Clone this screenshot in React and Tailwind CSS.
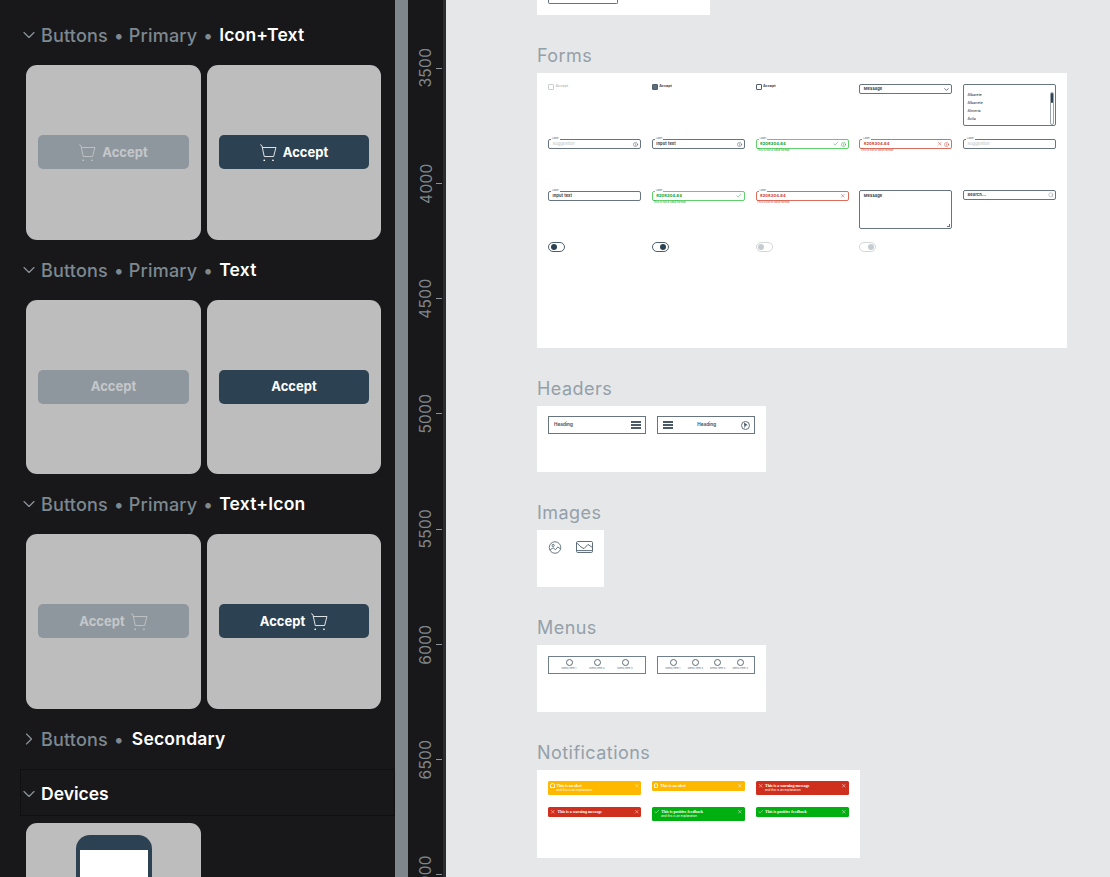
import { Check, X, ChevronDown, ChevronRight, Search, Info } from "lucide-react";

const FONT = "font-['Inter','Liberation_Sans',sans-serif]";

function Cart({ className }) {
  return (
    <svg viewBox="0 0 16 16" fill="none" stroke="currentColor" strokeWidth="0.8" className={className}>
      <path d="M0.2 0.6 L1.8 1.5 L4 11.8 H12.8 L15 3.3 H2.2" />
      <circle cx="4" cy="15.4" r="0.8" fill="currentColor" stroke="none" />
      <circle cx="12.2" cy="15.4" r="0.8" fill="currentColor" stroke="none" />
    </svg>
  );
}

function SectionHead({ parts, active, open = true }) {
  return (
    <div className="h-[60px] flex items-center pl-[19px] text-[18px] tracking-[0.2px]">
      {open ? (
        <ChevronDown size={20} strokeWidth={1.4} className="text-[#8b959c] mr-[2px] shrink-0" />
      ) : (
        <ChevronRight size={20} strokeWidth={1.4} className="text-[#8b959c] mr-[2px] shrink-0" />
      )}
      {parts.map((p) => (
        <span key={p} className="text-[#7d8890] font-medium mr-[5px]">
          {p} <span className="ml-[1px]">•</span>
        </span>
      ))}
      <span className={`text-white font-semibold text-[17.5px] ${open ? "ml-[1px]" : "ml-[3px]"}`}>{active}</span>
    </div>
  );
}

function Btn({ disabled, icon, width }) {
  const tone = disabled ? "bg-[#8f979e] text-[#c4c7ca]" : "bg-[#2c4252] text-white";
  return (
    <div className={`${width} h-[34px] rounded-[5px] pt-[1px] flex items-center justify-center gap-[6px] text-[13px] font-bold ${tone}`}>
      {icon === "left" && <Cart className="w-[17px] h-[17px]" />}
      <span>Accept</span>
      {icon === "right" && <Cart className="w-[17px] h-[17px]" />}
    </div>
  );
}

function ButtonRow({ icon, height = "h-[175px]" }) {
  return (
    <div className="grid grid-cols-[175px_174px] gap-x-[6px] pl-[26px]">
      <div className={`${height} rounded-[11px] bg-[#bdbdbd] flex items-center justify-center pb-[1px]`}>
        <Btn disabled icon={icon} width="w-[151px]" />
      </div>
      <div className={`${height} rounded-[11px] bg-[#bdbdbd] flex items-center justify-center pb-[1px]`}>
        <Btn icon={icon} width="w-[150px]" />
      </div>
    </div>
  );
}

function Sidebar() {
  return (
    <aside className="w-[395px] shrink-0 bg-[#18181a] pt-[5px] overflow-hidden">
      <SectionHead parts={["Buttons", "Primary"]} active="Icon+Text" />
      <ButtonRow icon="left" />
      <SectionHead parts={["Buttons", "Primary"]} active="Text" />
      <ButtonRow height="h-[174px]" />
      <SectionHead parts={["Buttons", "Primary"]} active="Text+Icon" />
      <ButtonRow icon="right" />
      <SectionHead parts={["Buttons"]} active="Secondary" open={false} />
      <div className="ml-[20px] h-[47px] border border-[#101012] flex items-center pt-[3px] text-[17.5px] font-semibold text-white">
        <ChevronDown size={20} strokeWidth={1.4} className="text-[#8b959c] -ml-[2px] mr-[2px]" />
        Devices
      </div>
      <div className="ml-[26px] mt-[7px] w-[175px] h-[175px] rounded-[11px] bg-[#bdbdbd] pt-[12px]">
        <div className="mx-auto w-[76px] h-[150px] rounded-t-[14px] bg-[#2c4252] pt-[15px] px-[4px]">
          <div className="h-full bg-white" />
        </div>
      </div>
    </aside>
  );
}

function Ruler() {
  const marks = [3500, 4000, 4500, 5000, 5500, 6000, 6500, 7000];
  return (
    <div className="w-[38px] shrink-0 bg-[#18181a] border-r-[3px] border-[#2b2e31] pt-[10.4px] overflow-hidden">
      {marks.map((m) => (
        <div key={m} className="h-[115.25px] flex items-center">
          <div className="w-[28px] flex justify-center pl-[8px]">
            <span className="-rotate-90 text-[15.5px] tracking-[0.3px] text-[#7f878d]">{m}</span>
          </div>
          <div className="w-[6px] h-px bg-[#8b9298]" />
        </div>
      ))}
    </div>
  );
}

function Heading({ children }) {
  return (
    <div className="h-[58px] pt-[31px] text-[18px] leading-[20px] tracking-[0.45px] text-[#94a0a8]">
      {children}
    </div>
  );
}

function CheckItem({ state }) {
  const box = state === "off" ? "border-[#c9ced2]" : "border-[#4d5f6c]";
  const text = state === "off" ? "text-[#c2c7cb]" : "text-[#3c4d5a]";
  return (
    <div className={`flex items-center gap-[1.5px] text-[3.6px] font-bold h-[6px] ${text}`}>
      <div className={`w-[6px] h-[6px] rounded-[1px] border ${box} ${state === "on" ? "bg-[#5d6c78]" : "bg-white"}`} />
      Accept
    </div>
  );
}

const TONES = {
  base: { border: "border-[#66757f]", text: "text-[#33434f]" },
  ok: { border: "border-[#5fd06b]", text: "text-[#0a9d1c]" },
  bad: { border: "border-[#dc6d5d]", text: "text-[#cc3a28]" },
};

function Field({ tone = "base", value, muted, icons, helper }) {
  const t = TONES[tone];
  return (
    <div className="relative mt-[1px] w-[93px]">
      <span className="absolute left-[3px] -top-[2px] px-[1px] bg-white text-[2.6px] leading-[3px] text-[#5b6b78]">Label</span>
      <div className={`h-[10px] rounded-[2px] border ${t.border} flex items-center justify-between pl-[3.5px] pr-[2px]`}>
        <span className={`text-[4px] tracking-[0.1px] font-bold ${muted ? "text-[#b4bcc2] font-normal" : t.text}`}>{value}</span>
        <span className={`flex items-center gap-[2px] ${t.text}`}>{icons}</span>
      </div>
      {helper && <div className={`text-[2.8px] leading-[3.5px] pl-[1.5px] ${t.text}`}>This is not a valid format</div>}
    </div>
  );
}

function Toggle({ on, disabled }) {
  const border = disabled ? "border-[#d3d7da]" : "border-[#4d5f6c]";
  const knob = disabled ? "bg-[#c5cbcf]" : "bg-[#2c4252]";
  return (
    <div className={`w-[17px] h-[10px] rounded-full border ${border} flex items-center px-[1.5px] ${on ? "justify-end" : ""}`}>
      <div className={`w-[6px] h-[6px] rounded-full ${knob}`} />
    </div>
  );
}

function FormsPanel() {
  const info = <Info size={5} strokeWidth={2} />;
  const check = <Check size={5.5} strokeWidth={2} />;
  const cross = <X size={5.5} strokeWidth={2} />;
  return (
    <div className="w-[530px] h-[275px] bg-white pt-[11px] pl-[11px] grid grid-cols-[repeat(5,93px)] grid-rows-[54px_52px_51px_1fr] gap-x-[10.75px] justify-start items-start">
      <CheckItem state="off" />
      <CheckItem state="on" />
      <CheckItem />
      <div className="h-[10px] rounded-[2px] border border-[#66757f] flex items-center justify-between pl-[3.5px] pr-[1px] text-[4px] tracking-[0.1px] font-bold text-[#33434f]">
        Message
        <ChevronDown size={7} strokeWidth={2.5} className="text-[#33434f]" />
      </div>
      <div className="h-[42px] rounded-[2px] border border-[#66757f] flex justify-between pl-[3.5px] pr-[1px] pt-[7.5px] text-[3.6px] font-medium text-[#33434f]">
        <div className="flex flex-col gap-[2.8px]">
          <span>Albarete</span>
          <span>Albanete</span>
          <span>Almería</span>
          <span>Ávila</span>
        </div>
        <div className="w-[4px] h-[33px] -mt-[1px] rounded-full border border-[#9aa3a9]">
          <div className="h-[10px] rounded-full bg-[#2c4252]" />
        </div>
      </div>

      <Field value="Suggestion" muted icons={info} />
      <Field value="Input text" icons={info} />
      <Field tone="ok" value="8208304.64" icons={<>{check}{info}</>} helper />
      <Field tone="bad" value="8208304.64" icons={<>{cross}{info}</>} helper />
      <Field value="Suggestion" muted />

      <Field value="Input text" />
      <Field tone="ok" value="8208304.64" icons={check} helper />
      <Field tone="bad" value="8208304.64" icons={cross} helper />
      <div className="relative h-[39px] rounded-[2px] border border-[#66757f] pl-[3.5px] pt-[1.5px] text-[4px] tracking-[0.1px] font-bold text-[#33434f]">
        Message
        <span className="absolute right-[1px] bottom-[1px] w-[3px] h-[3px] border-b border-r border-[#66757f]" />
      </div>
      <div className="h-[10px] rounded-[2px] border border-[#66757f] flex items-center justify-between pl-[3.5px] pr-[1.5px] text-[4px] tracking-[0.1px] font-bold text-[#33434f]">
        Search...
        <Search size={6} strokeWidth={1.5} className="text-[#66757f]" />
      </div>

      <div className="mt-[1px]"><Toggle /></div>
      <div className="mt-[1px]"><Toggle on /></div>
      <div className="mt-[1px]"><Toggle disabled /></div>
      <div className="mt-[1px]"><Toggle on disabled /></div>
    </div>
  );
}

function Burger() {
  return (
    <div className="w-[10px] flex flex-col gap-[1.5px]">
      <div className="h-[1.5px] bg-[#4a5a66]" />
      <div className="h-[1.5px] bg-[#4a5a66]" />
      <div className="h-[1.5px] bg-[#4a5a66]" />
    </div>
  );
}

function HeadersPanel() {
  const box = "h-[18px] border border-b-[1.5px] border-[#66757f] flex items-center justify-between text-[4.6px] font-bold text-[#4a5a66]";
  return (
    <div className="w-[229px] h-[66px] bg-white pt-[10px] pl-[11px] flex gap-[11px]">
      <div className={`w-[98px] pl-[5px] pr-[4.5px] ${box}`}>
        Heading
        <Burger />
      </div>
      <div className={`w-[98px] pl-[4.5px] pr-[4px] ${box}`}>
        <Burger />
        Heading
        <svg viewBox="0 0 9 9" className="w-[9px] h-[9px] text-[#3e4f5c]" fill="none" stroke="currentColor" strokeWidth="0.8">
          <circle cx="4.5" cy="4.5" r="4" />
          <path d="M3 1.6 L6.8 4.2 L4.6 4.6 L3.6 7.4 Z" fill="currentColor" stroke="none" />
        </svg>
      </div>
    </div>
  );
}

function ImagesPanel() {
  return (
    <div className="w-[67px] h-[57px] bg-white pt-[11px] pl-[11px] flex items-start gap-[14px] text-[#4d5f6c]">
      <svg viewBox="0 0 14 14" fill="none" stroke="currentColor" strokeWidth="0.9" className="w-[14px] h-[13px]">
        <circle cx="7" cy="7" r="6.2" />
        <circle cx="5" cy="4.8" r="1.2" />
        <path d="M1.6 9.6 L5 7.4 L7.6 9.4 L10 6.4 L12.8 8.4" />
      </svg>
      <svg viewBox="0 0 17 12" fill="none" stroke="currentColor" strokeWidth="0.9" className="w-[17px] h-[12px]">
        <rect x="0.5" y="0.5" width="16" height="11" rx="1.2" />
        <path d="M0.8 2 L5 6 L8 7.6 L12 3.4 L16.2 6.4" />
        <path d="M1 9.6 H16" />
      </svg>
    </div>
  );
}

function MenuBox({ count, gap, left }) {
  const items = ["Menu Item 1", "Menu Item 2", "Menu Item 3", "Menu Item 4"].slice(0, count);
  return (
    <div className={`w-[98px] ${gap} ${left} h-[18px] border-[1.5px] border-[#6f808c] flex items-start pt-[1.5px]`}>
      {items.map((m) => (
        <div key={m} className="w-[20px] flex flex-col items-center">
          <div className="w-[7px] h-[7px] rounded-full border border-[#5b6b78]" />
          <span className="mt-[1px] text-[2.6px] leading-[3px] whitespace-nowrap text-[#5b6b78]">{m}</span>
        </div>
      ))}
    </div>
  );
}

function MenusPanel() {
  return (
    <div className="w-[229px] h-[67px] bg-white pt-[11px] pl-[11px] flex gap-[11px]">
      <MenuBox count={3} gap="gap-[8px]" left="pl-[10px]" />
      <MenuBox count={4} gap="gap-[2.4px]" left="pl-[5px]" />
    </div>
  );
}

const ALERT_BG = { warn: "bg-[#ffb800]", error: "bg-[#cf2f1d]", ok: "bg-[#00b010]" };

function Alert({ kind, title, sub }) {
  const Icon = kind === "error" ? X : kind === "ok" ? Check : null;
  return (
    <div className={`w-[93px] ${sub ? "h-[14px]" : "h-[9.5px]"} rounded-[1.5px] ${ALERT_BG[kind]} flex items-start justify-between px-[2px] pt-[2px] text-white`}>
      <div className="flex gap-[2px]">
        {Icon ? (
          <Icon size={5.5} strokeWidth={2} />
        ) : (
          <div className="w-[4.5px] h-[5px] rounded-t-full border border-white/90" />
        )}
        <div>
          <div className="text-[4px] leading-[5px] font-bold font-['Liberation_Serif',serif]">{title}</div>
          {sub && <div className="text-[3px] leading-[4px]">and this is an explanation</div>}
        </div>
      </div>
      <X size={5.5} strokeWidth={2} />
    </div>
  );
}

function NotificationsPanel() {
  return (
    <div className="w-[323px] h-[88px] bg-white pt-[11px] pl-[11px] grid grid-cols-[repeat(3,93px)] grid-rows-[26px_14px] gap-x-[10.75px] justify-start items-start">
      <Alert kind="warn" title="This is an alert" sub />
      <Alert kind="warn" title="This is an alert" />
      <Alert kind="error" title="This is a warning message" sub />
      <Alert kind="error" title="This is a warning message" />
      <Alert kind="ok" title="This is positive feedback" sub />
      <Alert kind="ok" title="This is positive feedback" />
    </div>
  );
}

export default function App() {
  return (
    <div className={`h-[877px] w-[1110px] flex overflow-hidden ${FONT}`}>
      <Sidebar />
      <div className="w-[13px] shrink-0 bg-[#7f878d]" />
      <Ruler />
      <main className="flex-1 bg-[#e6e7e9] pl-[91px] overflow-hidden">
        <div className="w-[173px] h-[15px] bg-white pl-[11px]">
          <div className="w-[70px] h-[4px] rounded-b-[2px] border border-t-0 border-[#66757f]" />
        </div>
        <Heading>Forms</Heading>
        <FormsPanel />
        <Heading>Headers</Heading>
        <HeadersPanel />
        <Heading>Images</Heading>
        <ImagesPanel />
        <Heading>Menus</Heading>
        <MenusPanel />
        <Heading>Notifications</Heading>
        <NotificationsPanel />
      </main>
    </div>
  );
}
